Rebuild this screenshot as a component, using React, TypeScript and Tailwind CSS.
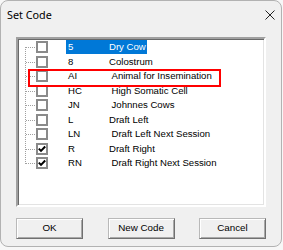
const codes = [
  { code: '5', label: 'Dry Cow', wide: false, checked: false, selected: true },
  { code: '8', label: 'Colostrum', wide: false, checked: false, selected: false },
  { code: 'AI', label: 'Animal for Insemination', wide: true, checked: false, selected: false },
  { code: 'HC', label: 'High Somatic Cell', wide: true, checked: false, selected: false },
  { code: 'JN', label: 'Johnnes Cows', wide: true, checked: false, selected: false },
  { code: 'L', label: 'Draft Left', wide: false, checked: false, selected: false },
  { code: 'LN', label: 'Draft Left Next Session', wide: true, checked: false, selected: false },
  { code: 'R', label: 'Draft Right', wide: false, checked: true, selected: false },
  { code: 'RN', label: 'Draft Right Next Session', wide: true, checked: true, selected: false },
];

const ROW = 14.5;

function TreeLines() {
  const first = 8.25;
  const last = first + ROW * (codes.length - 1);
  return (
    <svg className="absolute left-0 top-0" width="24" height="140" shapeRendering="crispEdges">
      <line x1="7.5" y1={Math.round(first)} x2="7.5" y2={Math.round(last) + 1} stroke="#a0a0a0" strokeDasharray="1 1" />
      {codes.map((_, i) => {
        const y = Math.round(first + ROW * i) + 0.5;
        return <line key={i} x1="8" y1={y} x2="18" y2={y} stroke="#a0a0a0" strokeDasharray="1 1" />;
      })}
    </svg>
  );
}

function CheckBox({ checked }: { checked: boolean }) {
  return (
    <span className="w-[12px] h-[12px] border-2 border-[#8a8a8a] bg-white flex items-center justify-center shrink-0">
      {checked && (
        <svg width="8" height="8" viewBox="0 0 8 8">
          <path d="M0.8 3.6 L3 5.9 L7.2 1.5" fill="none" stroke="#000" strokeWidth="2" />
        </svg>
      )}
    </span>
  );
}

function Button({ children }: { children: React.ReactNode }) {
  return (
    <button className="w-[67px] h-[21px] bg-[#f0f0f0] border border-t-[#b9b9b9] border-l-[#b9b9b9] border-b-[#707070] border-r-[#707070] shadow-[inset_1px_1px_0_#ffffff,inset_-1px_-1px_0_#a9a9a9] text-[9.8px] text-black flex items-center justify-center">
      {children}
    </button>
  );
}

export default function App() {
  return (
    <div className="w-[283px] h-[250px] bg-[#f7f7f7] overflow-hidden font-['Liberation_Sans',Arial,sans-serif]">
      <div className="w-[282px] h-[247px] rounded-[8px] border border-[#b2b2b2] bg-[#f0f0f0] flex flex-col">
        <div className="h-[28px] flex items-center justify-between pl-[6px] pr-[6px]">
          <span className="font-['Noto_Sans',sans-serif] text-[10.8px] text-black">Set Code</span>
          <svg width="10" height="10" viewBox="0 0 10 10">
            <path d="M0.5 0.5 L9.5 9.5 M9.5 0.5 L0.5 9.5" stroke="#222" strokeWidth="1" />
          </svg>
        </div>

        <div className="px-[15px] pt-[8px]">
          <div className="w-[250px] h-[170px] bg-white border-2 border-t-[#a0a0a0] border-l-[#a0a0a0] border-b-white border-r-white shadow-[inset_1px_1px_0_#696969,inset_-1px_-1px_0_#e3e3e3] relative pt-[1px]">
            <TreeLines />
            {codes.map((c) => (
              <div key={c.code} className="h-[14.5px] flex items-center pl-[18px] text-[9.6px] text-black">
                <CheckBox checked={c.checked} />
                <span
                  className={`ml-[18px] h-[14px] flex items-center pl-[2px] pr-[1px] ${
                    c.selected ? 'bg-[#0078d7] text-white' : ''
                  }`}
                >
                  <span className={c.wide ? 'w-[43.5px]' : 'w-[41px]'}>{c.code}</span>
                  <span>{c.label}</span>
                </span>
              </div>
            ))}
            <div className="absolute left-[10px] top-[30px] w-[193px] h-[18px] border-[2.5px] border-[#ff0000]" />
          </div>
        </div>

        <div className="px-[15px] pt-[11px] flex justify-between">
          <Button>OK</Button>
          <Button>New Code</Button>
          <Button>Cancel</Button>
        </div>
      </div>
    </div>
  );
}
